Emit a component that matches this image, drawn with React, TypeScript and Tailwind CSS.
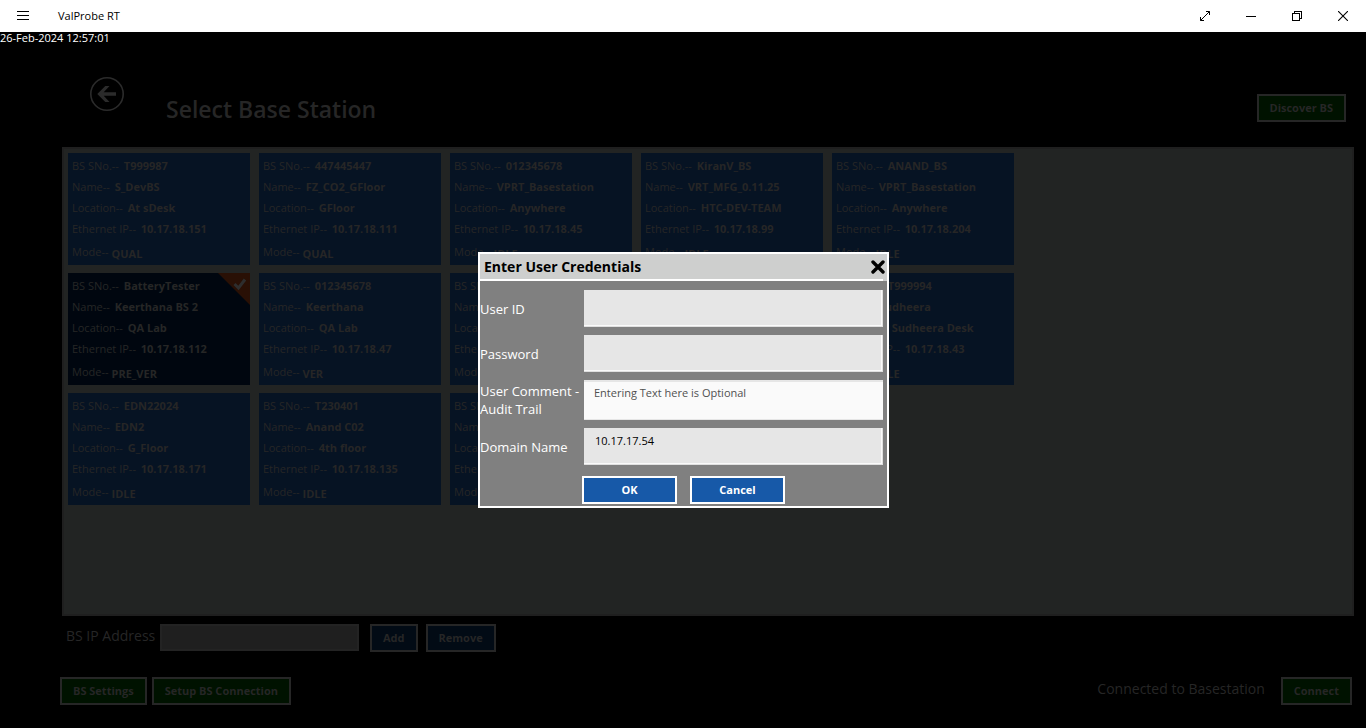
import type { ReactNode } from "react";

type Station = {
  serial: string;
  name: string;
  location: string;
  ip: string;
  mode: string;
  selected?: boolean;
};

const stations: Station[] = [
  { serial: "T999987", name: "S_DevBS", location: "At sDesk", ip: "10.17.18.151", mode: "QUAL" },
  { serial: "447445447", name: "FZ_CO2_GFloor", location: "GFloor", ip: "10.17.18.111", mode: "QUAL" },
  { serial: "012345678", name: "VPRT_Basestation", location: "Anywhere", ip: "10.17.18.45", mode: "IDLE" },
  { serial: "KiranV_BS", name: "VRT_MFG_0.11.25", location: "HTC-DEV-TEAM", ip: "10.17.18.99", mode: "IDLE" },
  { serial: "ANAND_BS", name: "VPRT_Basestation", location: "Anywhere", ip: "10.17.18.204", mode: "IDLE" },
  { serial: "BatteryTester", name: "Keerthana BS 2", location: "QA Lab", ip: "10.17.18.112", mode: "PRE_VER", selected: true },
  { serial: "012345678", name: "Keerthana", location: "QA Lab", ip: "10.17.18.47", mode: "VER" },
  { serial: "", name: "", location: "", ip: "", mode: "" },
  { serial: "", name: "", location: "", ip: "", mode: "" },
  { serial: "T999994", name: "Sudheera", location: "Sudheera Desk", ip: "10.17.18.43", mode: "IDLE" },
  { serial: "EDN22024", name: "EDN2", location: "G_Floor", ip: "10.17.18.171", mode: "IDLE" },
  { serial: "T230401", name: "Anand C02", location: "4th floor", ip: "10.17.18.135", mode: "IDLE" },
  { serial: "", name: "", location: "", ip: "", mode: "" },
];

function TitleBar() {
  return (
    <header className="flex h-8 shrink-0 items-center bg-white text-black">
      <button type="button" aria-label="Menu" className="flex h-8 w-[46px] items-center justify-center">
        <svg width="12" height="10" viewBox="0 0 12 10" stroke="currentColor" shapeRendering="crispEdges">
          <path d="M0 .5h12M0 4.5h12M0 8.5h12" />
        </svg>
      </button>
      <span className="ml-3 text-[11px]">ValProbe RT</span>
      <div className="ml-auto flex">
        <button type="button" aria-label="Full screen" className="flex h-8 w-[46px] items-center justify-center">
          <svg width="10" height="10" viewBox="0 0 10 10" fill="none" stroke="currentColor">
            <path d="M.5 9.500 9.500.5M6 .5h3.500v3.500M.5 6v3.500H4" />
          </svg>
        </button>
        <button type="button" aria-label="Minimize" className="flex h-8 w-[46px] items-center justify-center">
          <svg width="10" height="10" viewBox="0 0 10 10" stroke="currentColor" shapeRendering="crispEdges">
            <path d="M0 5.5h10" />
          </svg>
        </button>
        <button type="button" aria-label="Restore" className="flex h-8 w-[46px] items-center justify-center">
          <svg width="10" height="10" viewBox="0 0 10 10" fill="none" stroke="currentColor" shapeRendering="crispEdges">
            <path d="M.5 2.5h7v7h-7zM2.5 2.5v-2h7v7h-2" />
          </svg>
        </button>
        <button type="button" aria-label="Close" className="flex h-8 w-[46px] items-center justify-center">
          <svg width="10" height="10" viewBox="0 0 10 10" fill="none" stroke="currentColor" strokeWidth="1.1">
            <path d="M0 0 10 10M10 0 0 10" />
          </svg>
        </button>
      </div>
    </header>
  );
}

function PageButton({ tone, children }: { tone: "green" | "blue"; children: ReactNode }) {
  const color = tone === "green" ? "bg-[#001200]" : "bg-[#020b15]";
  return (
    <button
      type="button"
      className={`flex h-7 items-center justify-center border-2 border-[#262626] px-[11px] text-[11px] font-bold whitespace-nowrap text-[#262626] ${color}`}
    >
      {children}
    </button>
  );
}

function Row({ label, value }: { label: string; value: string }) {
  return (
    <p className="h-[21px]">
      {label}-- <b className="ml-[2px]">{value}</b>
    </p>
  );
}

function StationTile({ station }: { station: Station }) {
  return (
    <li
      className={`relative h-28 px-1 pt-[2px] text-[11px] leading-[21px] whitespace-nowrap text-[#262626] ${
        station.selected ? "bg-[#00060f]" : "bg-[#061323]"
      }`}
    >
      <Row label="BS SNo." value={station.serial} />
      <Row label="Name" value={station.name} />
      <Row label="Location" value={station.location} />
      <Row label="Ethernet IP" value={station.ip} />
      <p className="flex gap-[3px] pt-[2px]">
        <span>Mode--</span>
        <b className="pt-[2px]">{station.mode}</b>
      </p>
      {station.selected && (
        <svg className="absolute top-0 right-0" width="32" height="32" viewBox="0 0 32 32">
          <path d="M0 0H32V32Z" fill="#291005" />
          <path d="M16.500 11 20.500 15 27 6.500" fill="none" stroke="#2e2e2e" strokeWidth="3" />
        </svg>
      )}
    </li>
  );
}

const fieldClass =
  "block h-[37px] w-full border-r border-b border-[#e0e0e0] bg-[#e6e6e6] px-[11px] pb-3 text-[11px] text-black shadow-[inset_-1px_-1px_0_#fafafa] outline-none";
const labelClass = "w-[104px] shrink-0 text-[13px] leading-[18px] text-white";
const dialogButton =
  "flex h-7 w-[95px] items-center justify-center border-2 border-white bg-[#1759a8] text-[11px] font-bold text-white";

function CredentialsDialog() {
  return (
    <form
      role="dialog"
      aria-labelledby="dialog-title"
      className="w-[411px] border-2 border-white bg-[#808080]"
      onSubmit={(e) => e.preventDefault()}
    >
      <div className="relative flex h-[27px] items-center justify-between bg-[#cecfce] pr-[2px] pb-[2px] pl-1">
        <h2 id="dialog-title" className="text-[14px] leading-6 font-bold text-black">
          Enter User Credentials
        </h2>
        <button type="button" aria-label="Close dialog" className="text-black">
          <svg width="14" height="14" viewBox="0 0 14 14" stroke="currentColor" strokeWidth="3.4" strokeLinecap="round">
            <path d="M2 2 12 12M12 2 2 12" />
          </svg>
        </button>
        <div className="absolute right-1 bottom-0 left-0 h-[2px] bg-white" />
      </div>
      <div className="flex flex-col gap-2 pt-[9px] pr-1 pb-[2px]">
        <div className="flex items-center">
          <label htmlFor="user-id" className={labelClass}>User ID</label>
          <input id="user-id" type="text" className={fieldClass} />
        </div>
        <div className="flex items-center">
          <label htmlFor="password" className={labelClass}>Password</label>
          <input id="password" type="password" className={fieldClass} />
        </div>
        <div className="flex items-center">
          <label htmlFor="comment" className={labelClass}>
            User Comment -<br />
            Audit Trail
          </label>
          <textarea
            id="comment"
            placeholder="Entering Text here is Optional"
            className="block h-10 w-full resize-none border-t-2 border-b border-[#e6e6e6] bg-[#fafafa] px-[10px] pt-[2px] text-[11px] leading-[18px] outline-none placeholder:text-[#505050]"
          />
        </div>
        <div className="flex items-center">
          <label htmlFor="domain" className={labelClass}>Domain Name</label>
          <input id="domain" type="text" defaultValue="10.17.17.54" className={fieldClass} />
        </div>
        <div className="flex gap-[13px] pt-[3px] pl-[102px]">
          <button type="submit" className={dialogButton}>OK</button>
          <button type="button" className={dialogButton}>Cancel</button>
        </div>
      </div>
    </form>
  );
}

export default function App() {
  return (
    <div className="flex min-h-screen flex-col bg-black font-['Open_Sans','Noto_Sans',sans-serif]">
      <TitleBar />
      <main className="relative flex flex-1 flex-col pb-[23px]">
        <time className="h-3 text-[11px] leading-3 text-white">26-Feb-2024 12:57:01</time>
        <div className="flex h-[103px] items-start pt-[33px] pr-5 pl-[90px]">
          <button type="button" aria-label="Back" className="text-[#2b2b2b]">
            <svg width="34" height="34" viewBox="0 0 34 34">
              <circle cx="17" cy="17" r="16.2" fill="none" stroke="currentColor" strokeWidth="1.6" />
              <path d="M7.300 17 15.300 9H19.500L13.700 15.200H26V18.800H13.700L19.500 25H15.300Z" fill="currentColor" />
            </svg>
          </button>
          <h1 className="ml-[42px] pt-4 text-[23px] leading-8 font-semibold text-[#262626]">Select Base Station</h1>
          <div className="ml-auto pt-[17px]">
            <PageButton tone="green">Discover BS</PageButton>
          </div>
        </div>
        <ul className="mr-3 ml-[62px] grid flex-1 grid-cols-[repeat(5,182px)] content-start gap-x-[9px] gap-y-2 border-2 border-[#1f1f1f] bg-[#222423] p-1">
          {stations.map((station, i) => (
            <StationTile key={i} station={station} />
          ))}
        </ul>
        <div className="flex items-start pt-2 pl-[66px]">
          <label htmlFor="bs-ip" className="w-[94px] text-[14px] leading-6 text-[#262626]">
            BS IP Address
          </label>
          <input
            id="bs-ip"
            type="text"
            className="h-[27px] w-[199px] border-2 border-[#232323] bg-[#1f1f1f] px-2 text-[11px] text-[#262626] outline-none"
          />
          <div className="ml-[11px] flex gap-2">
            <PageButton tone="blue">Add</PageButton>
            <PageButton tone="blue">Remove</PageButton>
          </div>
        </div>
        <div className="flex items-center gap-[5px] pt-[25px] pr-[14px] pl-[60px]">
          <PageButton tone="green">BS Settings</PageButton>
          <PageButton tone="green">Setup BS Connection</PageButton>
          <span className="mr-[11px] ml-auto pb-1 text-[14px] leading-6 text-[#262626]">Connected to Basestation</span>
          <PageButton tone="green">Connect</PageButton>
        </div>
        <div className="absolute inset-0 flex items-center justify-center pl-px">
          <CredentialsDialog />
        </div>
      </main>
    </div>
  );
}
